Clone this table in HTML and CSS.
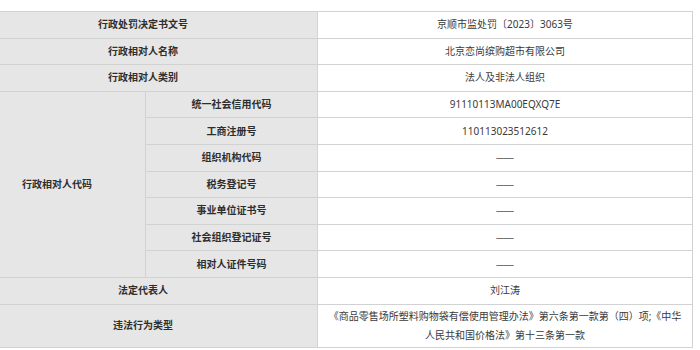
FILE: index.html
```html
<!DOCTYPE html>
<html lang="zh-CN">
<head>
<meta charset="utf-8">
<link rel="stylesheet" href="styles.css">
</head>
<body>
<div class="page">
<table class="info">
  <colgroup><col class="c1"><col class="c2"><col class="c3"></colgroup>
  <tr><th colspan="2">行政处罚决定书文号</th><td>京顺市监处罚〔2023〕3063号</td></tr>
  <tr><th colspan="2">行政相对人名称</th><td>北京恋尚缤购超市有限公司</td></tr>
  <tr><th colspan="2">行政相对人类别</th><td>法人及非法人组织</td></tr>
  <tr><th rowspan="7">行政相对人代码</th><th>统一社会信用代码</th><td>91110113MA00EQXQ7E</td></tr>
  <tr><th>工商注册号</th><td>110113023512612</td></tr>
  <tr><th>组织机构代码</th><td class="dash">——</td></tr>
  <tr><th>税务登记号</th><td class="dash">——</td></tr>
  <tr><th>事业单位证书号</th><td class="dash">——</td></tr>
  <tr><th>社会组织登记证号</th><td class="dash">——</td></tr>
  <tr><th>相对人证件号码</th><td class="dash">——</td></tr>
  <tr><th colspan="2">法定代表人</th><td>刘江涛</td></tr>
  <tr class="tall"><th colspan="2">违法行为类型</th><td class="wrap">《商品零售场所塑料购物袋有偿使用管理办法》第六条第一款第（四）项;《中华人民共和国价格法》第十三条第一款</td></tr>
</table>
</div>
</body>
</html>
```
FILE: styles.css
```css
html, body {
  margin: 0;
  padding: 0;
  background: #ffffff;
}
.page {
  padding-top: 11px;
  overflow: hidden;
  height: 350px;
  box-sizing: border-box;
}
.info {
  margin-left: -32px;
  width: 724px;
  table-layout: fixed;
  border-collapse: collapse;
  font-family: "Noto Sans", "Noto Sans CJK SC", sans-serif;
  font-size: 10px;
  color: #333333;
}
.c1 { width: 177px; }
.c2 { width: 172px; }
.c3 { width: 375px; }
.info tr { height: 26.6px; }
.info tr.tall { height: 43px; }
.info th, .info td {
  border: 1px solid #d2d2d2;
  padding: 0;
  text-align: center;
  vertical-align: middle;
  line-height: 19px;
}
.info th {
  background: #e6e6e6;
  font-weight: bold;
  color: #2e2e2e;
}
.info td {
  background: #ffffff;
  color: #3a3a3a;
}
.info td.dash {
  color: #555555;
  font-family: "Noto Sans CJK SC", sans-serif;
  font-size: 11px;
}
.info td.wrap {
  padding: 2px 8px 1px;
}
```
